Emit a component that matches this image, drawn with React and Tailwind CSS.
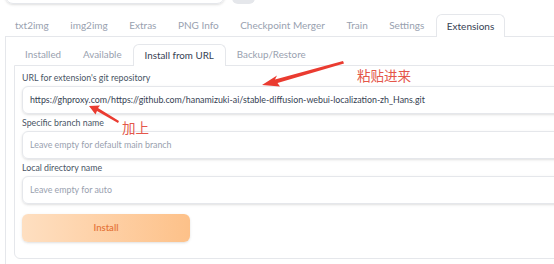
export default function App() {
  const tabs = ['txt2img', 'img2img', 'Extras', 'PNG Info', 'Checkpoint Merger', 'Train', 'Settings', 'Extensions'];
  const subTabs = ['Installed', 'Available', 'Install from URL', 'Backup/Restore'];

  return (
    <div className="relative w-[554px] h-[264px] overflow-hidden bg-white font-['Lato','Noto_Sans',sans-serif]">
      {/* bottom of the prompt row above, cut off by the screenshot */}
      <div className="flex gap-[7px] pl-[5px] -mt-[20px] h-[24px]">
        <div className="w-[220px] h-full rounded-lg border border-gray-200 shadow-sm" />
        <div className="w-[23px] h-full rounded-md bg-gray-200" />
      </div>

      {/* main tabs */}
      <div className="flex pl-[5px] mt-[10px] h-[22px]">
        {tabs.map((t) => (
          <div
            key={t}
            className={`flex items-center px-[10px] text-[10px] mr-[1.5px] ${
              t === 'Extensions'
                ? 'relative z-10 -mb-px bg-white border border-b-0 border-gray-200 rounded-t-md text-gray-700'
                : 'text-gray-400'
            }`}
          >
            {t}
          </div>
        ))}
      </div>

      <div className="ml-[5px] w-[600px] h-[240px] border-l border-t border-gray-200 pt-[7px] pl-[8px]">
        {/* sub tabs */}
        <div className="flex h-[21px]">
          {subTabs.map((t) => (
            <div
              key={t}
              className={`flex items-center px-[11px] text-[9.8px] ${
                t === 'Install from URL'
                  ? 'relative z-10 -mb-px bg-white border border-b-0 border-gray-200 rounded-t-md text-gray-700'
                  : 'text-gray-400'
              }`}
            >
              {t}
            </div>
          ))}
        </div>

        <div className="h-[194px] border border-gray-200 rounded-b-md pt-[6px] pl-[7px]">
          <div className="h-[12px] flex items-center text-[8.8px] text-gray-600">URL for extension's git repository</div>
          <div className="mt-[2px] h-[28px] w-[560px] flex items-center pl-[7px] rounded-md border border-gray-200 shadow-sm text-[8.85px] text-gray-700">
            https://ghproxy.com/https://github.com/hanamizuki-ai/stable-diffusion-webui-localization-zh_Hans.git
          </div>

          <div className="mt-[3px] h-[12px] flex items-center text-[8.8px] text-gray-600">Specific branch name</div>
          <div className="mt-[2px] h-[28px] w-[560px] flex items-center pl-[7px] rounded-md border border-gray-200 shadow-sm text-[8.85px] text-gray-400">
            Leave empty for default main branch
          </div>

          <div className="mt-[3px] h-[12px] flex items-center text-[8.8px] text-gray-600">Local directory name</div>
          <div className="mt-[2px] h-[28px] w-[560px] flex items-center pl-[7px] rounded-md border border-gray-200 shadow-sm text-[8.85px] text-gray-400">
            Leave empty for auto
          </div>

          <div className="mt-[10px] h-[28px] w-[168px] flex items-center justify-center rounded-md bg-gradient-to-r from-[#fedfc1] to-[#fdc189] shadow-sm text-[9.5px] font-semibold text-[#e5763a]">
            Install
          </div>
        </div>
      </div>

      {/* red annotations */}
      <svg className="absolute left-0 top-0 pointer-events-none" width="554" height="264">
        <path d="M343 61 L275 79.5 L277 75.5 L262 85 L280 86.5 L277.5 83 L344 63.5 Z" fill="#ea3b30" />
        <path d="M119 121 L98 108 L100 105.5 L89 106 L95.5 114.5 L97 111 L118 123 Z" fill="#ea3b30" />
      </svg>
      <div className="absolute left-[357px] top-[69px] text-[13.5px] leading-none text-[#e4574a] font-['Noto_Sans_CJK_SC',sans-serif]">
        粘贴进来
      </div>
      <div className="absolute left-[122px] top-[121px] text-[13.5px] leading-none text-[#e4574a] font-['Noto_Sans_CJK_SC',sans-serif]">
        加上
      </div>
    </div>
  );
}
